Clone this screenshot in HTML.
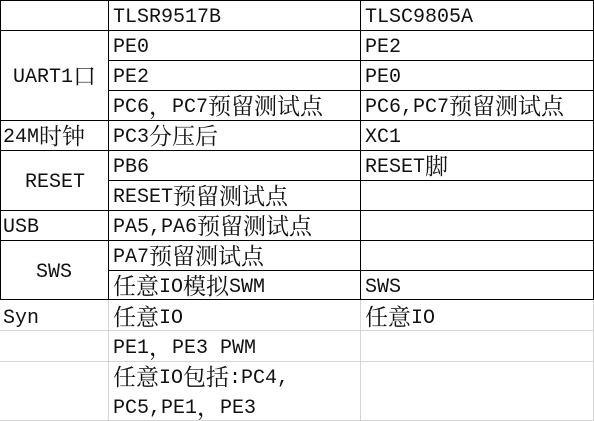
<!DOCTYPE html>
<html><head><meta charset="utf-8"><style>
html,body{margin:0;padding:0;background:#fff;width:594px;height:421px;overflow:hidden;position:relative}
.t{position:absolute;font-family:"Liberation Mono","Noto Serif CJK SC",monospace;font-size:20px;line-height:30px;color:#111;white-space:nowrap}
.t b{font-weight:normal;font-family:"Noto Serif CJK SC",serif;font-size:23px;line-height:20px;position:relative;top:2px}
.h{position:absolute;height:1px;background:#000}
.v{position:absolute;width:1px;background:#000}
.g{background:#d4d4d4}
</style></head><body>
<div class="h" style="left:0;top:0;width:594px"></div>
<div class="h" style="left:108px;top:30px;width:486px"></div>
<div class="h" style="left:108px;top:60px;width:486px"></div>
<div class="h" style="left:0;top:30px;width:108px"></div>
<div class="h" style="left:0;top:120px;width:594px"></div>
<div class="h" style="left:108px;top:90px;width:486px"></div>
<div class="h" style="left:0;top:150px;width:594px"></div>
<div class="h" style="left:108px;top:180px;width:486px"></div>
<div class="h" style="left:0;top:210px;width:594px"></div>
<div class="h" style="left:0;top:240px;width:594px"></div>
<div class="h" style="left:108px;top:270px;width:486px"></div>
<div class="h" style="left:0;top:299px;width:594px"></div>
<div class="h g" style="left:0;top:330px;width:594px"></div>
<div class="h g" style="left:0;top:361px;width:594px"></div>
<div class="h g" style="left:0;top:420px;width:594px"></div>
<div class="v" style="left:0;top:0;height:300px"></div>
<div class="v" style="left:108px;top:0;height:300px"></div>
<div class="v" style="left:360px;top:0;height:300px"></div>
<div class="v" style="left:593px;top:0;height:300px"></div>
<div class="v g" style="left:108px;top:300px;height:121px"></div>
<div class="v g" style="left:360px;top:300px;height:121px"></div>
<div class="v g" style="left:593px;top:300px;height:121px"></div>

<div class="t" style="left:113px;top:3px">TLSR9517B</div>
<div class="t" style="left:365px;top:3px">TLSC9805A</div>
<div class="t" style="left:113px;top:33px">PE0</div>
<div class="t" style="left:365px;top:33px">PE2</div>
<div class="t" style="left:13px;top:63px">UART1<b>口</b></div>
<div class="t" style="left:113px;top:63px">PE2</div>
<div class="t" style="left:365px;top:63px">PE0</div>
<div class="t" style="left:113px;top:93px">PC6<b>，</b>PC7<b>预留测试点</b></div>
<div class="t" style="left:365px;top:93px">PC6,PC7<b>预留测试点</b></div>
<div class="t" style="left:3px;top:123px">24M<b>时钟</b></div>
<div class="t" style="left:113px;top:123px">PC3<b>分压后</b></div>
<div class="t" style="left:365px;top:123px">XC1</div>
<div class="t" style="left:25px;top:168px">RESET</div>
<div class="t" style="left:113px;top:153px">PB6</div>
<div class="t" style="left:365px;top:153px">RESET<b>脚</b></div>
<div class="t" style="left:113px;top:183px">RESET<b>预留测试点</b></div>
<div class="t" style="left:3px;top:213px">USB</div>
<div class="t" style="left:113px;top:213px">PA5,PA6<b>预留测试点</b></div>
<div class="t" style="left:36px;top:258px">SWS</div>
<div class="t" style="left:113px;top:243px">PA7<b>预留测试点</b></div>
<div class="t" style="left:113px;top:273px"><b>任意</b>IO<b>模拟</b>SWM</div>
<div class="t" style="left:365px;top:273px">SWS</div>
<div class="t" style="left:3px;top:304px">Syn</div>
<div class="t" style="left:113px;top:304px"><b>任意</b>IO</div>
<div class="t" style="left:365px;top:304px"><b>任意</b>IO</div>
<div class="t" style="left:113px;top:334px">PE1<b>，</b>PE3 PWM</div>
<div class="t" style="left:113px;top:364px"><b>任意</b>IO<b>包括</b>:PC4,</div>
<div class="t" style="left:113px;top:394px">PC5,PE1<b>，</b>PE3</div>
</body></html>
